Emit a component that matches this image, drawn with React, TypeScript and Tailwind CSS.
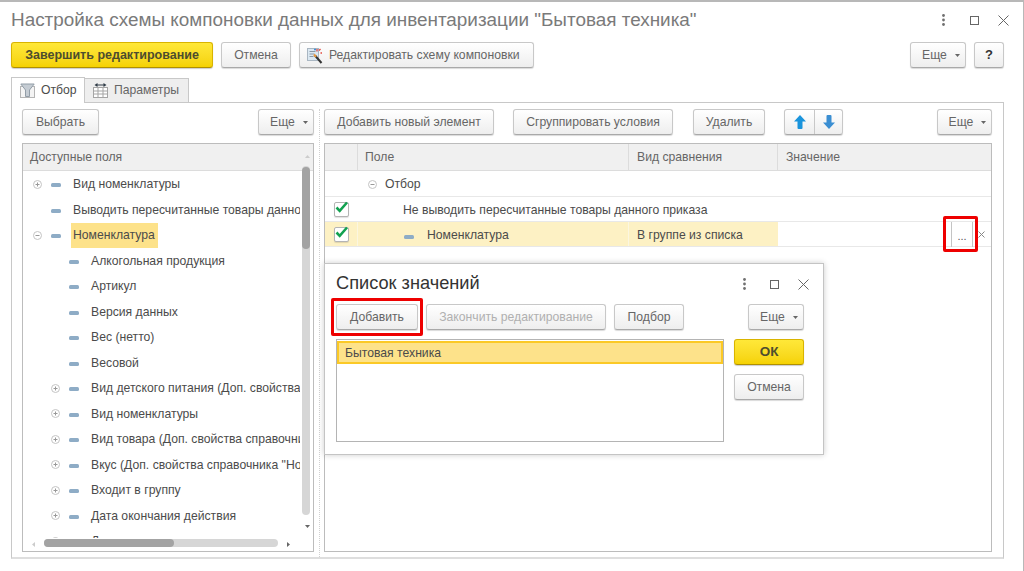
import React from "react";

const btnBase =
  "flex items-center justify-center h-[26px] shrink-0 rounded-[3px] border border-[#c8c8c8] border-b-[#a9a9a9] bg-gradient-to-b from-white to-[#eeeeee] shadow-[0_1px_1px_rgba(0,0,0,0.15)] text-[12.2px] text-[#666666] whitespace-nowrap";

function Btn({ className = "", children }: { className?: string; children: React.ReactNode }) {
  return <div className={`${btnBase} ${className}`}>{children}</div>;
}

function More({ className = "" }: { className?: string }) {
  return (
    <Btn className={`gap-[8px] pl-[6px] ${className}`}>
      <span>Еще</span>
      <svg width="5" height="3" viewBox="0 0 5 3"><path d="M0 0h5L2.5 3z" fill="#666" /></svg>
    </Btn>
  );
}

function YellowBtn({ className = "", children }: { className?: string; children: React.ReactNode }) {
  return (
    <div className={`flex items-center justify-center h-[26px] shrink-0 rounded-[3px] border border-[#d9b400] border-b-[#b09000] bg-gradient-to-b from-[#ffe838] to-[#f5d200] shadow-[0_1px_1px_rgba(0,0,0,0.2)] text-[12.5px] font-bold text-[#4d4d2e] whitespace-nowrap ${className}`}>
      {children}
    </div>
  );
}

function Dash() {
  return <div className="w-[10px] h-[4px] rounded-[1.5px] bg-[#8eacc6] shrink-0 mt-[2px]" />;
}

function Toggle({ plus }: { plus?: boolean }) {
  return (
    <svg width="9" height="9" viewBox="0 0 9 9" className="shrink-0">
      <circle cx="4.5" cy="4.5" r="4" fill="#fff" stroke="#c4c4c4" />
      <path d="M2.5 4.5h4" stroke="#999" />
      {plus && <path d="M4.5 2.5v4" stroke="#999" />}
    </svg>
  );
}

function Check() {
  return (
    <div className="relative w-[15px] h-[15px] border border-[#b4b4b4] rounded-[2px] bg-white shadow-[0_1px_1px_rgba(0,0,0,0.12)]">
      <svg width="15" height="14" viewBox="0 0 15 14" className="absolute left-[-1px] top-[-3px]">
        <path d="M2.5 7.5l3.2 3.3L13 2.5" fill="none" stroke="#12a150" strokeWidth="2.6" />
      </svg>
    </div>
  );
}

function WinIcons({ dotsGap }: { dotsGap: string }) {
  return (
    <div className="flex items-center">
      <svg width="3" height="12" viewBox="0 0 3 12"><g fill="#707070"><circle cx="1.5" cy="1.5" r="1.4" /><circle cx="1.5" cy="6" r="1.4" /><circle cx="1.5" cy="10.5" r="1.4" /></g></svg>
      <svg width="9" height="9" viewBox="0 0 9 9" className={dotsGap}><rect x=".5" y=".5" width="8" height="8" fill="none" stroke="#666" /></svg>
      <svg width="11" height="11" viewBox="0 0 11 11" className="ml-[19px]"><path d="M.5.5l10 10M10.500.5l-10 10" stroke="#666" fill="none" /></svg>
    </div>
  );
}

const tree: { t: string; l: number; toggle?: "plus" | "minus"; sel?: boolean }[] = [
  { t: "Вид номенклатуры", l: 0, toggle: "plus" },
  { t: "Выводить пересчитанные товары данного приказа", l: 0 },
  { t: "Номенклатура", l: 0, toggle: "minus", sel: true },
  { t: "Алкогольная продукция", l: 1 },
  { t: "Артикул", l: 1 },
  { t: "Версия данных", l: 1 },
  { t: "Вес (нетто)", l: 1 },
  { t: "Весовой", l: 1 },
  { t: "Вид детского питания (Доп. свойства справочника)", l: 1, toggle: "plus" },
  { t: "Вид номенклатуры", l: 1, toggle: "plus" },
  { t: "Вид товара (Доп. свойства справочника \"Номенклатура\")", l: 1, toggle: "plus" },
  { t: "Вкус (Доп. свойства справочника \"Номенклатура\")", l: 1, toggle: "plus" },
  { t: "Входит в группу", l: 1, toggle: "plus" },
  { t: "Дата окончания действия", l: 1, toggle: "plus" },
  { t: "Дата", l: 1, toggle: "plus" },
];

export default function App() {
  return (
    <div
      className="relative w-[1024px] h-[571px] bg-white border-t-2 border-r border-[#b8b8b8] overflow-hidden flex flex-col text-[#4b4b4b]"
      style={{ fontFamily: '"Liberation Sans", Arial, sans-serif' }}
    >
      {/* Title */}
      <div className="flex items-center justify-between h-[40px] pb-[4px] pl-[11px] pr-[14px] shrink-0">
        <div className="text-[18.9px] text-[#7a7a7a] whitespace-nowrap">
          Настройка схемы компоновки данных для инвентаризации "Бытовая техника"
        </div>
        <WinIcons dotsGap="ml-[25px]" />
      </div>

      {/* Toolbar */}
      <div className="flex items-center h-[26px] pl-[11px] shrink-0">
        <YellowBtn className="w-[202px]">Завершить редактирование</YellowBtn>
        <Btn className="w-[70px] ml-[8px]">Отмена</Btn>
        <Btn className="w-[235px] ml-[8px] gap-[6px] !justify-start pl-[7px]">
          <svg width="16" height="17" viewBox="0 0 16 17">
            <rect x=".5" y="1.500" width="11" height="12" fill="#dbe8f2" stroke="#a9b6c2" />
            <path d="M2.500 4.500h6M2.500 7h5M2.500 9.500h4" stroke="#8b98a5" />
            <path d="M8 8.500l6.500 7.500" stroke="#333" strokeWidth="2" />
            <path d="M7 7.500l2 2.300" stroke="#e9963a" strokeWidth="2" />
            <path d="M12 3.500l1.500-1.500M10 4.500V2M13.500 6H15" stroke="#e2483d" strokeWidth="1.300" />
            <path d="M7 2.500h2" stroke="#3f8fd6" strokeWidth="1.300" />
          </svg>
          <span>Редактировать схему компоновки</span>
        </Btn>
        <More className="w-[56px] ml-[376px]" />
        <Btn className="w-[30px] ml-[8px] !text-[#333] font-bold !text-[13px]">?</Btn>
      </div>

      {/* Tabs */}
      <div className="flex items-end h-[35px] pl-[11px] shrink-0 relative z-10 mb-[-1px]">
        <div className="flex items-center gap-[6px] w-[74px] h-[26px] pl-[8px] bg-white border border-b-0 border-[#c8c8c8] text-[12.2px]">
          <svg width="15" height="15" viewBox="0 0 15 15">
            <rect x=".5" y="3.500" width="14" height="11" fill="#f4f4f4" stroke="#b5b5b5" />
            <path d="M.8 1h13.400L9.500 7v6.500h-4V7z" fill="#c5ccd3" stroke="#929da7" />
          </svg>
          <span>Отбор</span>
        </div>
        <div className="flex items-center gap-[6px] w-[104px] h-[25px] pl-[8px] bg-[#eeeeee] border border-l-0 border-[#c8c8c8] text-[12.2px] text-[#666666]">
          <svg width="15" height="15" viewBox="0 0 15 15">
            <rect x=".5" y="4.500" width="14" height="10" fill="#fff" stroke="#a5a5a5" />
            <path d="M5 5v9M10 5v9M1 8h13M1 11h13" stroke="#a5a5a5" />
            <path d="M4 2h7" stroke="#2f3b46" />
            <path d="M1.500 2L4.500 0v4zM13.500 2L10.500 0v4z" fill="#2f3b46" />
          </svg>
          <span>Параметры</span>
        </div>
      </div>

      {/* Panel */}
      <div className="flex w-[993px] h-[457px] ml-[11px] border border-[#c8c8c8] border-b-2 border-b-[#dedede] pt-[6px] pl-[10px] shrink-0">
        {/* Left */}
        <div className="w-[292px] flex flex-col shrink-0">
          <div className="flex justify-between h-[26px]">
            <Btn className="w-[77px]">Выбрать</Btn>
            <More className="w-[56px]" />
          </div>
          <div className="mt-[8px] h-[409px] border border-[#bcbcbc] flex flex-col relative overflow-hidden">
            <div className="h-[27px] bg-[#f0f0f0] border-b border-[#dcdcdc] flex items-center pl-[7px] text-[12.2px] text-[#666] shrink-0">
              Доступные поля
            </div>
            <div className="w-[277px] h-[367px] overflow-hidden">
              {tree.map((r, i) => (
                <div key={i} className="flex items-center h-[25.5px] pt-[1px] whitespace-nowrap text-[12.2px]">
                  <div className={`flex items-center shrink-0 ${r.l ? "w-[68px] pl-[28px]" : "w-[50px] pl-[10px]"}`}>
                    <div className="w-[18px] shrink-0 flex">
                      {r.toggle && <Toggle plus={r.toggle === "plus"} />}
                    </div>
                    <Dash />
                  </div>
                  <div className={r.sel ? "flex items-center h-[25.5px] bg-[#fde28a] pl-[2px] pr-[3px] ml-[-2px]" : ""}>{r.t}</div>
                </div>
              ))}
            </div>
            {/* Vertical scrollbar */}
            <div className="absolute right-[3px] top-[11px] text-[0px]">
              <svg width="5" height="3" viewBox="0 0 5 3"><path d="M2.500 0L5 3H0z" fill="#ccc" /></svg>
            </div>
            <div className="absolute right-[3px] top-[22px] bottom-[36px] w-[8px] rounded-[4px] bg-[#d6d6d6]">
              <div className="w-[8px] h-[82px] mt-[1px] rounded-[4px] bg-[#a3a3a3]" />
            </div>
            <div className="absolute right-[3px] bottom-[23px] text-[0px]">
              <svg width="5" height="3" viewBox="0 0 5 3"><path d="M0 0h5L2.500 3z" fill="#666" /></svg>
            </div>
            {/* Horizontal scrollbar */}
            <div className="absolute left-[9px] bottom-[4px] text-[0px]">
              <svg width="3" height="5" viewBox="0 0 3 5"><path d="M3 0v5L0 2.500z" fill="#ccc" /></svg>
            </div>
            <div className="absolute left-[21px] bottom-[4px] w-[234px] h-[8px] rounded-[4px] bg-[#d6d6d6]">
              <div className="w-[130px] h-[8px] rounded-[4px] bg-[#a3a3a3]" />
            </div>
            <div className="absolute right-[23px] bottom-[4px] text-[0px]">
              <svg width="3" height="5" viewBox="0 0 3 5"><path d="M0 0v5l3-2.500z" fill="#666" /></svg>
            </div>
          </div>
        </div>

        {/* Splitter */}
        <div className="w-[10px] shrink-0 flex justify-center">
          <div className="w-0 h-full border-l border-dotted border-[#d0d0d0]" />
        </div>

        {/* Right */}
        <div className="w-[668px] flex flex-col shrink-0">
          <div className="flex h-[26px]">
            <Btn className="w-[170px]">Добавить новый элемент</Btn>
            <Btn className="w-[160px] ml-[19px]">Сгруппировать условия</Btn>
            <Btn className="w-[72px] ml-[20px]">Удалить</Btn>
            <div className="flex ml-[19px] w-[59px] h-[26px] rounded-[3px] border border-[#c8c8c8] border-b-[#a9a9a9] bg-gradient-to-b from-white to-[#eeeeee] shadow-[0_1px_1px_rgba(0,0,0,0.15)]">
              <div className="w-[30px] flex items-center justify-center border-r border-[#c8c8c8]">
                <svg width="12" height="14" viewBox="0 0 12 14"><path d="M6 0l6 6.500H8.500V13a1 1 0 0 1-1 1h-3a1 1 0 0 1-1-1V6.500H0z" fill="#1a94dc" /></svg>
              </div>
              <div className="flex-1 flex items-center justify-center">
                <svg width="12" height="14" viewBox="0 0 12 14"><path d="M6 14L0 7.500h3.500V1a1 1 0 0 1 1-1h3a1 1 0 0 1 1 1v6.500H12z" fill="#3a8ed2" /></svg>
              </div>
            </div>
            <More className="w-[55px] ml-[94px]" />
          </div>
          <div className="mt-[8px] h-[409px] border border-[#bcbcbc] flex flex-col text-[12.2px]">
            <div className="flex h-[27px] bg-[#f0f0f0] border-b border-[#dcdcdc] text-[#666] shrink-0">
              <div className="w-[33px] border-r border-[#dcdcdc]" />
              <div className="w-[271px] border-r border-[#dcdcdc] flex items-center pl-[7px]">Поле</div>
              <div className="w-[149px] border-r border-[#dcdcdc] flex items-center pl-[8px]">Вид сравнения</div>
              <div className="flex-1 flex items-center pl-[8px]">Значение</div>
            </div>
            <div className="flex items-center h-[26px] pt-[1px] border-b border-[#e8e8e8] pl-[43px] gap-[8px]">
              <Toggle />
              <span>Отбор</span>
            </div>
            <div className="flex items-center h-[25px] border-b border-[#e8e8e8]">
              <div className="w-[33px] flex justify-center shrink-0"><Check /></div>
              <div className="pl-[45px] pt-[2px]">Не выводить пересчитанные товары данного приказа</div>
            </div>
            <div className="flex h-[25px] border-b border-[#e8e8e8]">
              <div className="w-[33px] flex items-center justify-center bg-[#fdf1c4] border-r border-[#fbf6e0] shrink-0"><Check /></div>
              <div className="w-[271px] flex items-center bg-[#fdf1c4] border-r border-[#fbf6e0] pl-[46px] pt-[3px] gap-[13px] shrink-0">
                <Dash />
                <span>Номенклатура</span>
              </div>
              <div className="w-[149px] flex items-center bg-[#fdf1c4] pl-[8px] pt-[3px] shrink-0">В группе из списка</div>
              <div className="flex-1 flex items-center justify-end pr-[6px]">
                <div className="w-[22px] h-[25px] border-x border-[#c4c4c4] flex items-center justify-center pt-[4px] text-[11px] text-[#555]">...</div>
                <svg width="7" height="7" viewBox="0 0 7 7" className="ml-[5px]"><path d="M.5.5l6 6M6.500.5l-6 6" stroke="#888" /></svg>
              </div>
            </div>
          </div>
        </div>
      </div>

      {/* Red highlight around the "..." button */}
      <div className="absolute left-[943px] top-[214px] w-[35px] h-[36px] border-[3px] border-[#ee0000] rounded-[2px] pointer-events-none" />

      {/* Dialog */}
      <div className="absolute left-[324px] top-[261px] w-[500px] h-[192px] bg-white border border-[#c4c4c4] shadow-[0_0_6px_rgba(0,0,0,0.2)] pl-[11px] z-20">
        <div className="flex items-center justify-between h-[40px] pr-[14px]">
          <div className="text-[18.2px] text-[#333]">Список значений</div>
          <WinIcons dotsGap="ml-[24px]" />
        </div>
        <div className="flex h-[26px]">
          <Btn className="w-[82px]">Добавить</Btn>
          <Btn className="w-[180px] ml-[8px] !text-[#b0b0b0]">Закончить редактирование</Btn>
          <Btn className="w-[70px] ml-[8px]">Подбор</Btn>
          <More className="w-[56px] ml-[64px]" />
        </div>
        <div className="flex mt-[9px]">
          <div className="w-[388px] h-[103px] border border-[#b4b4b4] pt-[1px] text-[12.2px] shrink-0">
            <div className="h-[23px] bg-[#fde28a] border-2 border-[#fbc926] flex items-center pl-[6px] pt-[2px]">Бытовая техника</div>
          </div>
          <div className="w-[70px] ml-[10px] flex flex-col gap-[9px]">
            <YellowBtn className="w-[70px] !text-[13.5px]">ОК</YellowBtn>
            <Btn className="w-[70px]">Отмена</Btn>
          </div>
        </div>
      </div>

      {/* Red highlight around "Добавить" */}
      <div className="absolute left-[331px] top-[296px] w-[92px] h-[38px] border-[3px] border-[#ee0000] rounded-[2px] pointer-events-none z-30" />
    </div>
  );
}
